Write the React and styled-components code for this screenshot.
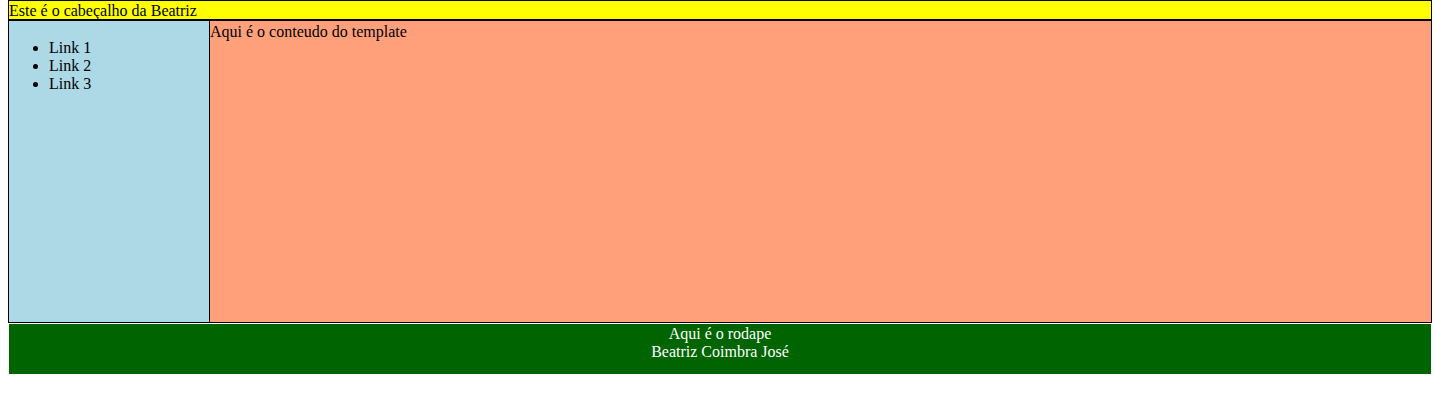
import React from 'react';
import styled, { createGlobalStyle } from 'styled-components';

const GlobalStyle = createGlobalStyle`
  html, body {
    overflow: visible;
  }
  body {
    margin: 0 0 0 8px;
    width: 1424px;
    font-family: "Liberation Serif", "Times New Roman", serif;
    font-size: 16px;
    line-height: 18px;
    color: black;
  }
`;

const Page = styled.div`
  width: 1424px;
`;

const Header = styled.header`
  box-sizing: border-box;
  height: 20px;
  padding-top: 1px;
  border: 1px solid black;
  background: yellow;
`;

const BodyRow = styled.div`
  display: flex;
  box-sizing: border-box;
  height: 303px;
  border: 1px solid black;
`;

const Sidebar = styled.nav`
  width: 200px;
  flex-shrink: 0;
  background: lightblue;
  border-right: 1px solid black;
`;

const LinkList = styled.ul`
  margin: 18px 0 16px;
  padding-left: 40px;
`;

const Content = styled.main`
  flex: 1;
  padding-top: 2px;
  background: lightsalmon;
`;

const Footer = styled.footer`
  box-sizing: border-box;
  height: 52px;
  padding-top: 1px;
  border: 1px solid white;
  background: darkgreen;
  color: white;
  text-align: center;
`;

const App = () => {
  return (
    <>
      <GlobalStyle />
      <Page>
        <Header>Este é o cabeçalho da Beatriz</Header>
        <BodyRow>
          <Sidebar>
            <LinkList>
              <li>Link 1</li>
              <li>Link 2</li>
              <li>Link 3</li>
            </LinkList>
          </Sidebar>
          <Content>Aqui é o conteudo do template</Content>
        </BodyRow>
        <Footer>
          Aqui é o rodape
          <br />
          Beatriz Coimbra José
        </Footer>
      </Page>
    </>
  );
};

export default App;
